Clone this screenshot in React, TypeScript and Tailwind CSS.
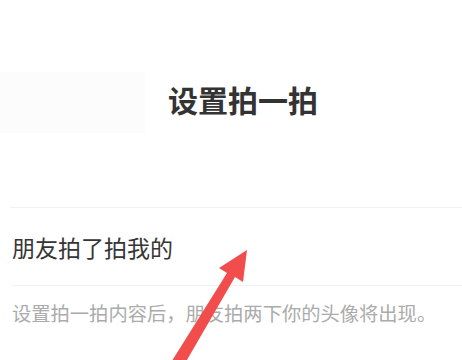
const font = "font-['Noto_Sans_CJK_SC','Noto_Sans',sans-serif]";

const Arrow = () => (
  <svg
    className="absolute left-0 top-0 pointer-events-none"
    width="462"
    height="360"
    viewBox="0 0 462 360"
  >
    <polygon
      points="165,372 180,372 235,277 243,282 247,250 219,268 227,273"
      fill="#f24d4d"
    />
  </svg>
);

export default function App() {
  return (
    <div className={`relative w-[462px] h-[360px] overflow-hidden bg-white ${font}`}>
      <div className="pt-[72px] flex items-start">
        <div className="w-[145px] h-[61px] bg-[#fcfcfc]" />
        <h1 className="ml-[23px] mt-[12px] text-[30px] leading-[30px] font-bold text-[#333333]">
          设置拍一拍
        </h1>
      </div>

      <div className="mt-[74px] ml-[10px] h-px bg-[#f1f1f1]" />

      <div className="pl-[12px] pt-[28px] pb-[27px] text-[23px] leading-[22px] text-[#353535]">
        朋友拍了拍我的
      </div>

      <div className="ml-[12px] h-px bg-[#f1f1f1]" />

      <p className="pl-[12px] mt-[18px] text-[19.3px] leading-[19px] text-[#ababab] whitespace-nowrap">
        设置拍一拍内容后，朋友拍两下你的头像将出现。
      </p>

      <Arrow />
    </div>
  );
}
